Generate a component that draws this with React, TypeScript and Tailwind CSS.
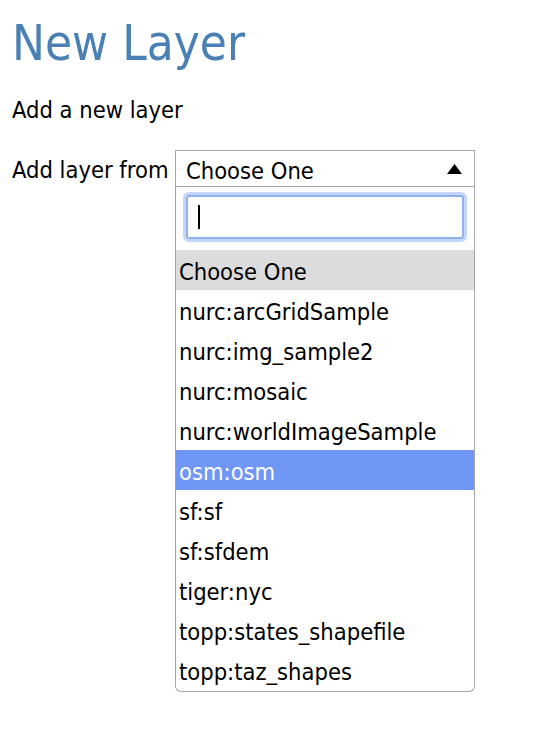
import React from "react";

const options = [
  "Choose One",
  "nurc:arcGridSample",
  "nurc:img_sample2",
  "nurc:mosaic",
  "nurc:worldImageSample",
  "osm:osm",
  "sf:sf",
  "sf:sfdem",
  "tiger:nyc",
  "topp:states_shapefile",
  "topp:taz_shapes",
];

export default function App() {
  const font = { fontFamily: '"DejaVu Sans Condensed", "DejaVu Sans", sans-serif' };
  return (
    <div className="min-h-[738px] w-[546px] bg-white pl-3 text-black" style={font}>
      <h1 className="pt-[16px] text-[49px] leading-[56px] text-[#4a80b4]">New Layer</h1>
      <p className="mt-[24px] text-[23.5px] leading-[28px]">Add a new layer</p>
      <div className="mt-[26px] flex items-start">
        <label className="w-[163px] pt-[6px] text-[23.5px] leading-[28px]">Add layer from</label>
        <div className="w-[300px]">
          <div className="flex h-[37px] items-center justify-between border border-[#a6a6a6] pl-[10px] pr-[12px] text-[23.5px] leading-[28px]">
            <span className="pt-[4px]">Choose One</span>
            <svg width="15" height="10" viewBox="0 0 15 10"><polygon points="7.5,0 15,10 0,10" fill="#000" /></svg>
          </div>
          <div className="rounded-b-[6px] border-x border-b border-[#a6a6a6] pb-[1px]">
            <div className="px-[10px] pb-[11px] pt-[8px]">
              <div className="flex h-[44px] items-center rounded-[3px] border-2 border-[#8fb0ee] pl-[10px] shadow-[0_0_0_3px_#c3d5f8]">
                <div className="h-[24px] w-[2px] bg-black" />
              </div>
            </div>
            {options.map((o) => (
              <div
                key={o}
                className={
                  "flex h-[40px] items-center px-[3px] pt-[4px] text-[23.5px] leading-[28px] " +
                  (o === "osm:osm" ? "bg-[#7096f6] text-white" : o === "Choose One" ? "bg-[#dcdcdc]" : "")
                }
              >
                {o}
              </div>
            ))}
          </div>
        </div>
      </div>
    </div>
  );
}
